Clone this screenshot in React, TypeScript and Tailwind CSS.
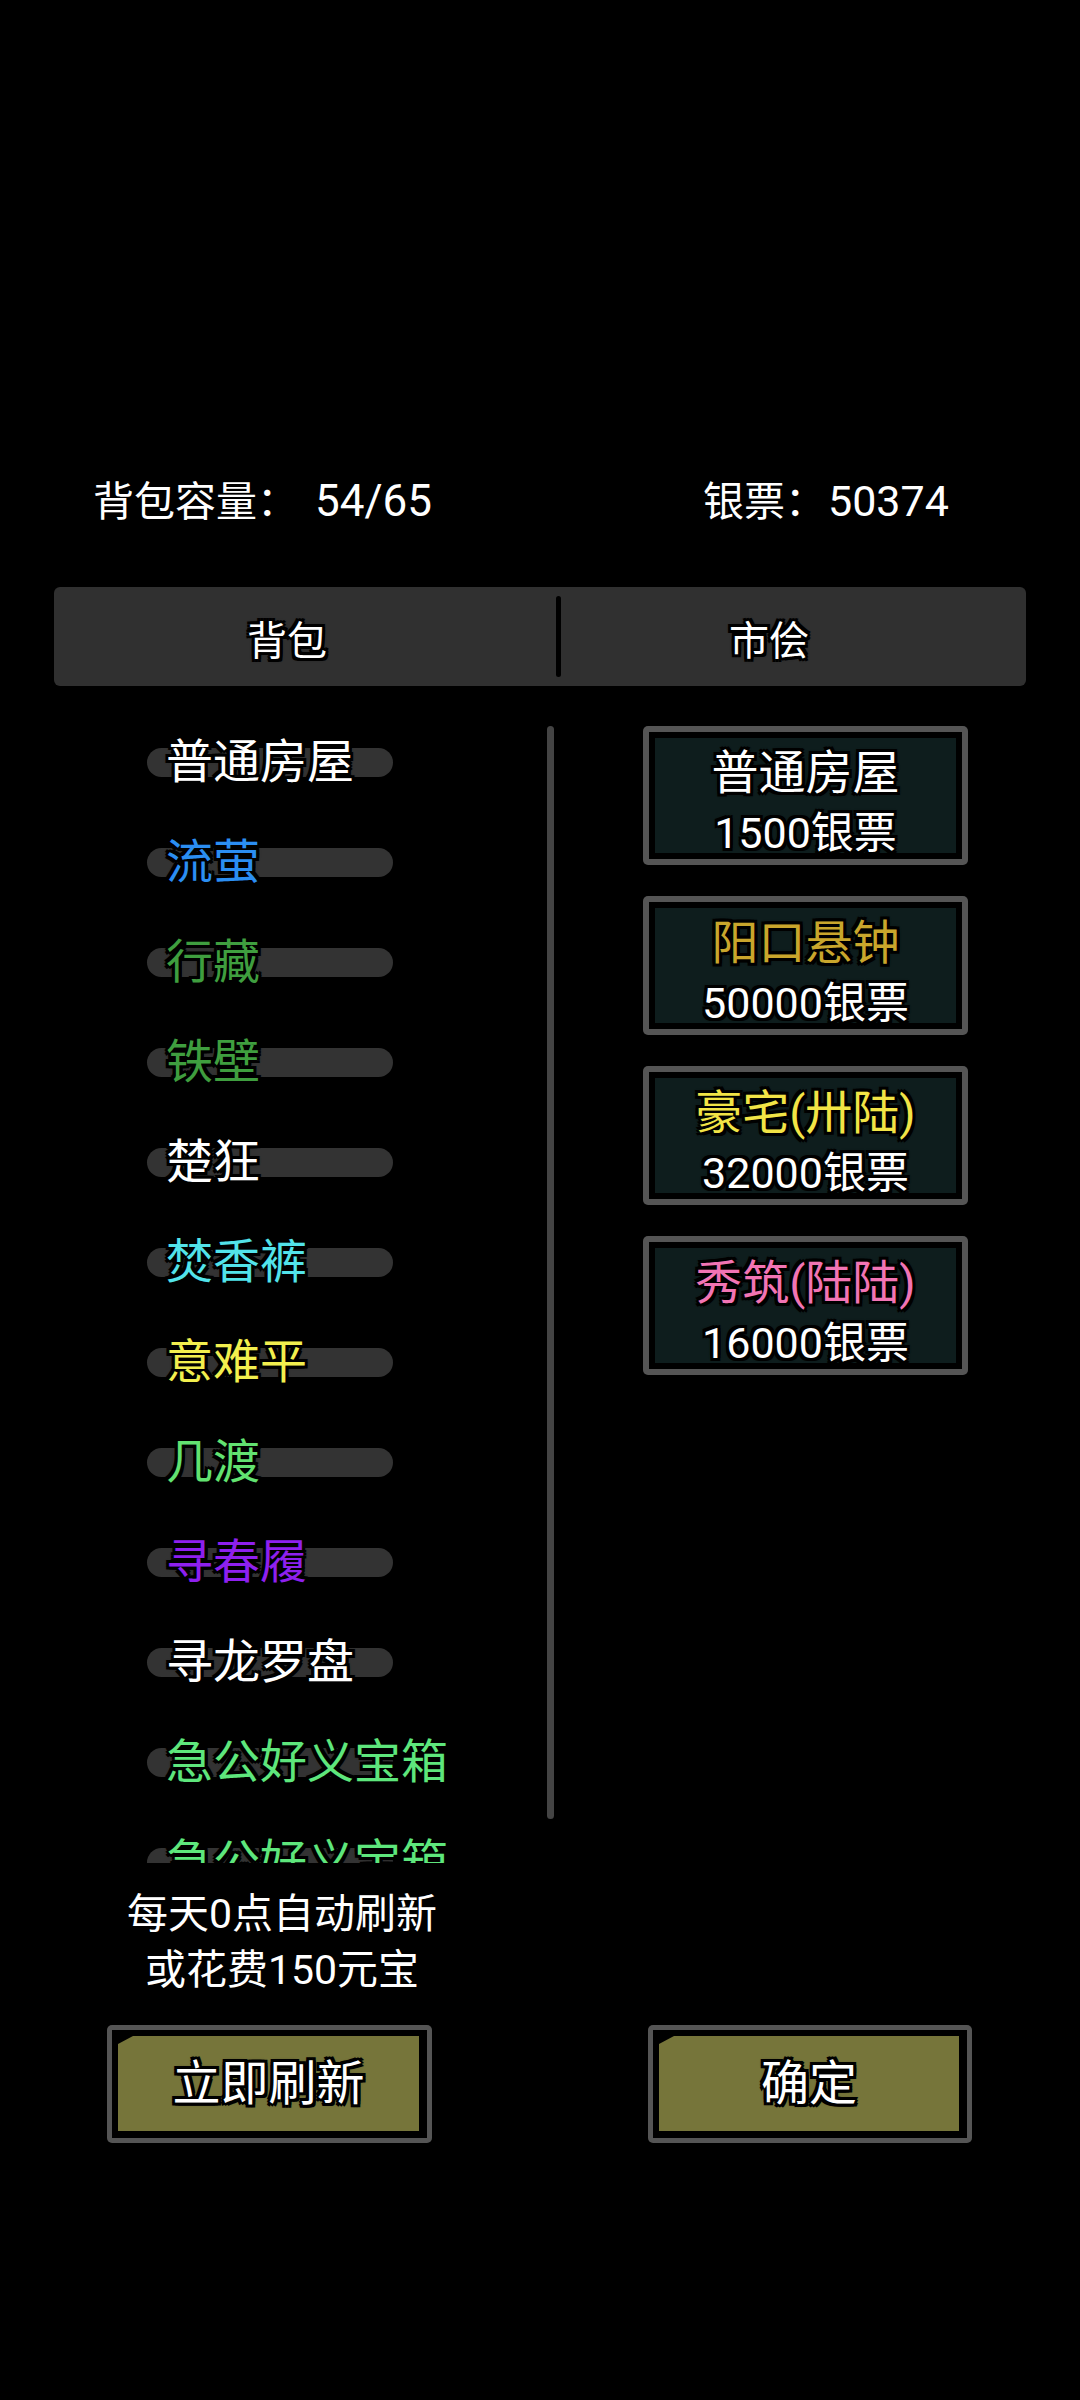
import React from "react";

const outline =
  "[text-shadow:-3px_-3px_0_#000,3px_-3px_0_#000,-3px_3px_0_#000,3px_3px_0_#000,0_-3px_0_#000,0_3px_0_#000,-3px_0_0_#000,3px_0_0_#000,0_0_4px_#000]";

const items = [
  { name: "普通房屋", color: "text-white" },
  { name: "流萤", color: "text-[#2b8ef2]" },
  { name: "行藏", color: "text-[#3f9e3f]" },
  { name: "铁壁", color: "text-[#3f9e3f]" },
  { name: "楚狂", color: "text-white" },
  { name: "焚香裤", color: "text-[#52e3ea]" },
  { name: "意难平", color: "text-[#f2ef4e]" },
  { name: "几渡", color: "text-[#62e271]" },
  { name: "寻春履", color: "text-[#8e20ee]" },
  { name: "寻龙罗盘", color: "text-white" },
  { name: "急公好义宝箱", color: "text-[#5ee67c]" },
  { name: "急公好义宝箱", color: "text-[#5ee67c]" },
];

const market = [
  { title: "普通房屋", color: "text-white", price: "1500银票" },
  { title: "阳口悬钟", color: "text-[#c9a62c]", price: "50000银票" },
  { title: "豪宅(卅陆)", color: "text-[#f2e446]", price: "32000银票" },
  { title: "秀筑(陆陆)", color: "text-[#f274b4]", price: "16000银票" },
];

function GameButton({ label, className }: { label: string; className?: string }) {
  return (
    <div className={"h-[118px] rounded-[5px] bg-[#555555] p-[5px] " + (className ?? "")}>
      <div className="w-full h-full bg-black pt-[6px] pl-[6px] pr-[8px] pb-[7px]">
        <div
          className={
            "w-full h-full bg-[#76753a] [clip-path:polygon(15px_0,100%_0,100%_100%,0_100%,0_8px)] flex items-center justify-center text-[48px] leading-none text-white " +
            outline
          }
        >
          {label}
        </div>
      </div>
    </div>
  );
}

export default function App() {
  return (
    <div className="w-[1080px] h-[2400px] bg-black text-white font-[Roboto,'Noto_Sans_CJK_SC',sans-serif] overflow-hidden">
      {/* header */}
      <div className="pt-[473px] flex text-[41px] leading-[56px] text-white">
        <div className="ml-[93px] w-[610px]">
          <span>背包容量：</span>
          <span className="ml-[17px] text-[44px]">54/65</span>
        </div>
        <div>
          <span>银票：</span>
          <span className="ml-[2px] text-[43px]">50374</span>
        </div>
      </div>

      {/* tabs */}
      <div className="mt-[57px] ml-[54px] w-[972px] h-[99px] bg-[#303030] rounded-[6px] flex items-center text-[40px] leading-[56px]">
        <div className={"w-[502px] pr-[36px] pt-[11px] text-center text-white " + outline}>背包</div>
        <div className="w-[5px] h-[81px] rounded-full bg-black" />
        <div className={"w-[465px] pr-[49px] pt-[11px] text-center text-white " + outline}>市侩</div>
      </div>

      {/* content */}
      <div className="mt-[26px] flex">
        <div className="relative w-[560px] h-[1151px]">
          <div className="h-full overflow-hidden">
            {items.map((it, i) => (
              <div key={i} className="relative h-[100px] flex items-center">
                <div className="absolute left-[147px] top-[36px] w-[246px] h-[29px] rounded-full bg-[#333333]" />
                <div className={"relative ml-[166px] text-[47px] leading-[56px] " + it.color + " " + outline}>
                  {it.name}
                </div>
              </div>
            ))}
          </div>
          <div className="absolute left-[547px] top-[14px] w-[7px] h-[1093px] rounded-full bg-[#444444]" />
        </div>

        <div className="ml-[83px] pt-[14px] flex flex-col gap-[31px]">
          {market.map((m, i) => (
            <div key={i} className="w-[325px] h-[139px] rounded-[5px] bg-[#555555] p-[6px]">
              <div className="w-full h-full border-[6px] border-black bg-[#0e1d1d] flex flex-col items-center pt-[8px]">
                <div className={"text-[47px] leading-[54px] whitespace-nowrap " + m.color + " " + outline}>
                  {m.title}
                </div>
                <div className={"mt-[11px] text-[43px] leading-[44px] whitespace-nowrap text-white " + outline}>
                  {m.price}
                </div>
              </div>
            </div>
          ))}
        </div>
      </div>

      {/* bottom text */}
      <div className="mt-[23px] w-[540px] pl-[24px] text-center text-[41px] leading-[56px] text-white">
        <div>每天0点自动刷新</div>
        <div>或花费150元宝</div>
      </div>

      {/* buttons */}
      <div className="mt-[27px] flex">
        <GameButton label="立即刷新" className="ml-[107px] w-[325px]" />
        <GameButton label="确定" className="ml-[216px] w-[324px]" />
      </div>
    </div>
  );
}
